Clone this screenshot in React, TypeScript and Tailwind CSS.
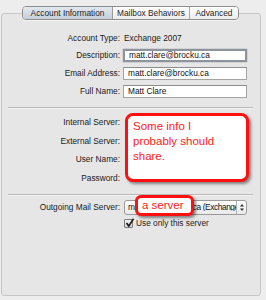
import React from "react";

function Row({ label, h, children, className = "" }: { label: string; h: string; children?: React.ReactNode; className?: string }) {
  return (
    <div className={`flex items-center ${h} ${className}`}>
      <div className="w-[118px] shrink-0 text-right text-[#1a1a1a]">{label}</div>
      <div className="ml-[3px] flex-1 flex items-center">{children}</div>
    </div>
  );
}

function Field({ value, focused = false }: { value: string; focused?: boolean }) {
  return (
    <div
      className={`h-[13px] w-[124px] bg-white flex items-center pl-[4px] text-[#111] ${
        focused
          ? "border-[2px] border-[#8e949c] shadow-[0_0_1px_#6d7380]"
          : "border border-[#a4a4a4] border-t-[#8c8c8c]"
      }`}
    >
      {value}
    </div>
  );
}

export default function App() {
  return (
    <div className="w-[266px] h-[300px] bg-[#ededed] pt-[6px] font-['Liberation_Sans',Arial,sans-serif] text-[8.3px] leading-none">
      <div className="ml-[1px] w-[260px] flex flex-col">
        {/* tabs */}
        <div className="relative z-10 ml-[21px] flex h-[14px] w-[217px] rounded-[4px] border border-[#8d8d8d] overflow-hidden text-[#1e1e1e] shadow-[0_1px_0_rgba(255,255,255,0.6)]">
          <div className="w-[90px] flex items-center justify-center bg-gradient-to-b from-[#e3e8ef] to-[#c8ced8] border-r border-[#9a9a9a]">
            Account Information
          </div>
          <div className="w-[77px] flex items-center justify-center bg-gradient-to-b from-[#ffffff] to-[#ececec] border-r border-[#a8a8a8]">
            Mailbox Behaviors
          </div>
          <div className="flex-1 flex items-center justify-center bg-gradient-to-b from-[#ffffff] to-[#ececec]">
            Advanced
          </div>
        </div>

        {/* panel */}
        <div className="relative -mt-[7px] h-[283px] rounded-[3px] border border-[#c6c6c6] bg-[#e6e6e6] pt-[17px]">
          <Row label="Account Type:" h="h-[14px]">
            <span className="ml-[1px] text-[#1a1a1a]">Exchange 2007</span>
          </Row>
          <Row label="Description:" h="h-[15px]" className="mt-[3px]">
            <Field value="matt.clare@brocku.ca" focused />
          </Row>
          <Row label="Email Address:" h="h-[15px]" className="mt-[3px]">
            <Field value="matt.clare@brocku.ca" />
          </Row>
          <Row label="Full Name:" h="h-[15px]" className="mt-[3px]">
            <Field value="Matt Clare" />
          </Row>

          <div className="mt-[8px] ml-[6px] mr-[7px] h-px bg-[#b9b9b9] shadow-[0_1px_0_#f4f4f4]" />

          <Row label="Internal Server:" h="h-[19px]" className="mt-[5px]" />
          <Row label="External Server:" h="h-[18px]" />
          <Row label="User Name:" h="h-[19px]" />
          <Row label="Password:" h="h-[19px]" />

          <div className="mt-[6px] ml-[6px] mr-[7px] h-px bg-[#b9b9b9] shadow-[0_1px_0_#f4f4f4]" />

          <Row label="Outgoing Mail Server:" h="h-[16px]" className="mt-[4px]">
            <div className="ml-[1px] h-[15px] w-[123px] rounded-[3px] border border-[#9a9a9a] bg-gradient-to-b from-[#ffffff] to-[#e9e9e9] flex items-center overflow-hidden">
              <span className="flex-1 pl-[3px] whitespace-nowrap overflow-hidden text-[#111] tracking-[-0.4px]">
                matt.clare@brocku.ca (Exchange)
              </span>
              <span className="w-[10px] shrink-0 h-full border-l border-[#b0b0b0] flex items-center justify-center">
                <svg width="6" height="9" viewBox="0 0 6 9">
                  <path d="M1 3.5 L3 1 L5 3.5 Z" fill="#333" />
                  <path d="M1 5.5 L3 8 L5 5.5 Z" fill="#333" />
                </svg>
              </span>
            </div>
          </Row>
          <Row label="" h="h-[11px]" className="mt-[3px]">
            <div className="ml-[1px] flex items-center">
              <span className="relative w-[9px] h-[9px] border border-[#7e7e7e] rounded-[1px] bg-gradient-to-b from-[#f4f4f4] to-[#cfcfcf]">
                <svg className="absolute -top-[2px] left-[0px]" width="10" height="10" viewBox="0 0 10 10">
                  <path d="M1.5 5 L3.8 8 L8.5 0.8" fill="none" stroke="#1b1b1b" strokeWidth="1.6" />
                </svg>
              </span>
              <span className="ml-[3px] text-[#1a1a1a]">Use only this server</span>
            </div>
          </Row>

          {/* callouts */}
          <div className="absolute left-[123px] top-[99px] w-[124px] h-[69px] rounded-[8px] border-[3px] border-[#ff1010] bg-white shadow-[2px_2px_3px_rgba(0,0,0,0.45)] pl-[5px] pt-[3px] text-[11.5px] leading-[15px] text-[#ff1a1a]">
            Some info I<br />probably should<br />share.
          </div>
          <div className="absolute left-[133px] top-[181px] w-[59px] h-[21px] rounded-[6px] border-[3px] border-[#ff1010] bg-white shadow-[2px_2px_3px_rgba(0,0,0,0.45)] pl-[4px] flex items-center text-[11.5px] text-[#ff1a1a]">
            a server
          </div>
        </div>
      </div>
    </div>
  );
}
